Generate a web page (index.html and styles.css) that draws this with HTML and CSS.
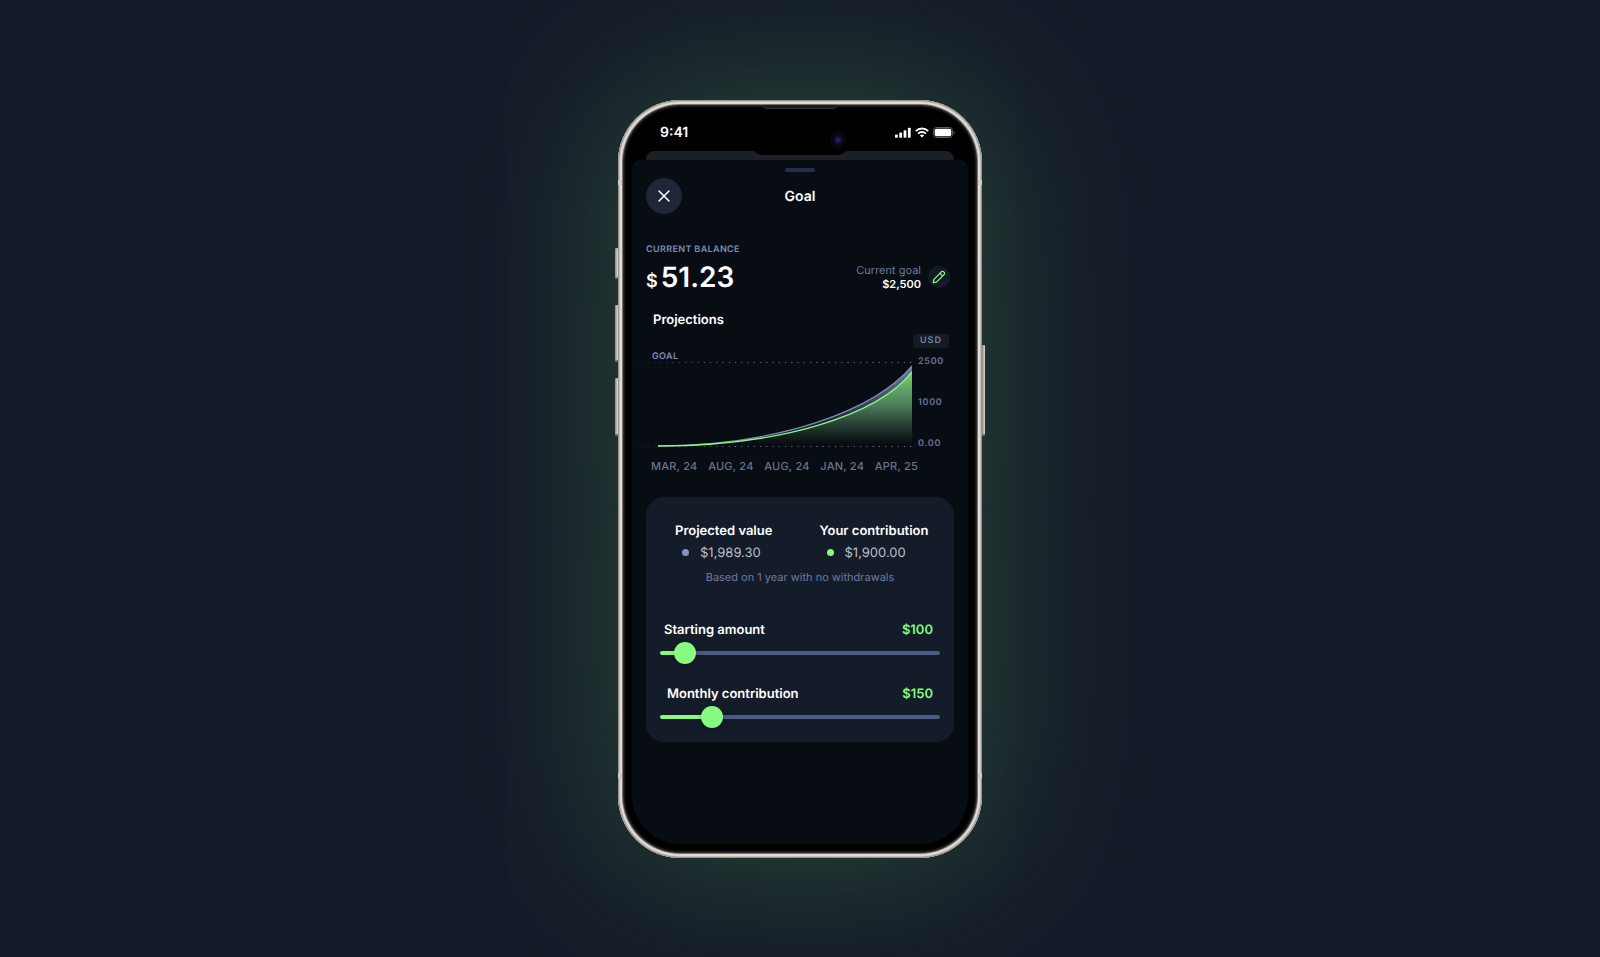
FILE: index.html
```html
<!DOCTYPE html>
<html lang="en">
<head>
  <meta charset="UTF-8">
  <meta name="viewport" content="width=device-width, initial-scale=1.0">
  <title>Goal</title>
  <link rel="stylesheet" href="styles.css">
</head>
<body>
  <div class="phone">
    <span class="side-btn mute"></span>
    <span class="side-btn vol-up"></span>
    <span class="side-btn vol-down"></span>
    <span class="side-btn power"></span>
    <span class="speaker"></span>
    <span class="antenna left-top"></span>
    <span class="antenna right-top"></span>
    <span class="antenna left-bottom"></span>
    <span class="antenna right-bottom"></span>

    <div class="screen">
      <div class="status-bar">
        <span class="time">9:41</span>
        <div class="status-icons">
          <svg width="16" height="11" viewBox="0 0 16 11" fill="#fff">
            <rect x="0" y="7.4" width="2.8" height="3.4" rx="0.9"/>
            <rect x="4.3" y="5.6" width="2.8" height="5.2" rx="0.9"/>
            <rect x="8.6" y="3.2" width="2.8" height="7.6" rx="0.9"/>
            <rect x="12.9" y="0.7" width="2.8" height="10.1" rx="0.9"/>
          </svg>
          <svg width="14" height="11" viewBox="0 0 14 11" fill="none" stroke="#fff" stroke-width="1.9">
            <path d="M0.8 4.1a8.8 8.8 0 0 1 12.4 0"/>
            <path d="M3.1 6.6a5.5 5.5 0 0 1 7.8 0"/>
            <path d="M7 10.6 4.9 8.5a3 3 0 0 1 4.2 0z" fill="#fff" stroke="none"/>
          </svg>
          <svg width="22" height="11" viewBox="0 0 22 11">
            <rect x="0.5" y="0.5" width="19" height="10" rx="3" fill="none" stroke="#5c5c5c"/>
            <rect x="1.7" y="1.7" width="16.6" height="7.6" rx="1.8" fill="#fff"/>
            <path d="M20.6 3.8v3.4c.7-.3 1.1-1 1.1-1.7s-.4-1.4-1.1-1.7z" fill="#6c6c6c"/>
          </svg>
        </div>
      </div>
      <div class="notch"><span class="camera"></span></div>
      <div class="back-card"></div>

      <main class="sheet">
        <div class="handle"></div>
        <header>
          <button class="close-btn" type="button" aria-label="Close">
            <svg width="12" height="12" viewBox="0 0 12 12" fill="none" stroke="#fff" stroke-width="1.5" stroke-linecap="round">
              <path d="M1 1l10 10M11 1L1 11"/>
            </svg>
          </button>
          <h1>Goal</h1>
        </header>

        <div class="caption">CURRENT BALANCE</div>
        <div class="balance-row">
          <div class="amount"><span>$</span>51.23</div>
          <div class="goal">
            <div class="goal-text">
              <div class="goal-label">Current goal</div>
              <div class="goal-value">$2,500</div>
            </div>
            <button class="edit-btn" type="button" aria-label="Edit goal">
              <svg width="14" height="14" viewBox="0 0 14 14" fill="none" stroke="#86fb80" stroke-width="1.3" stroke-linejoin="round">
                <path d="M1.3 12.7l.5-3.1 7.4-7.7a1.9 1.9 0 0 1 2.8 2.7l-7.6 7.5z"/>
                <path d="M8 3.3l2.7 2.6"/>
              </svg>
            </button>
          </div>
        </div>

        <h2>Projections</h2>
        <div class="currency"><span>USD</span></div>
        <div class="chart">
          <div class="plot">
            <span class="goal-line">GOAL</span>
            <svg viewBox="0 0 280 92">
              <defs>
                <linearGradient id="green" x1="0" y1="0" x2="0" y2="1">
                  <stop offset="0" stop-color="#86fb80" stop-opacity=".85"/>
                  <stop offset=".45" stop-color="#79c78a" stop-opacity=".6"/>
                  <stop offset=".97" stop-color="#5fa070" stop-opacity="0"/>
                </linearGradient>
                <linearGradient id="purple" x1="0" y1="0" x2="0" y2="1">
                  <stop offset="0" stop-color="#7f88b4" stop-opacity=".9"/>
                  <stop offset=".8" stop-color="#7f88b4" stop-opacity=".1"/>
                </linearGradient>
                <linearGradient id="fade" gradientUnits="userSpaceOnUse" x1="0" y1="0" x2="280" y2="0">
                  <stop offset="0" stop-color="#8490a8" stop-opacity=".1"/>
                  <stop offset=".3" stop-color="#8490a8" stop-opacity=".7"/>
                  <stop offset="1" stop-color="#8490a8" stop-opacity=".8"/>
                </linearGradient>
              </defs>
              <path d="M3 6.5H280" stroke="url(#fade)" stroke-dasharray="1.2 5.05"/>
              <path d="M26 90C150 89 243 54 280 10V16C246 59 150 90 26 90z" fill="url(#purple)"/>
              <path d="M26 90C150 90 246 59 280 16V90z" fill="url(#green)"/>
              <path d="M3 90.5H280" stroke="url(#fade)" stroke-dasharray="1.2 5.05"/>
              <path d="M26 90C150 89 243 54 280 10" fill="none" stroke="#7f8bb8" stroke-width="1.2"/>
              <path d="M26 90C150 90 246 59 280 16" fill="none" stroke="#86fb80" stroke-width="1.3"/>
            </svg>
          </div>
          <div class="y-axis">
            <span>2500</span>
            <span>1000</span>
            <span>0.00</span>
          </div>
        </div>
        <div class="x-axis">
          <span>MAR, 24</span>
          <span>AUG, 24</span>
          <span>AUG, 24</span>
          <span>JAN, 24</span>
          <span>APR, 25</span>
        </div>

        <section class="card">
          <div class="totals">
            <div class="total">
              <h3>Projected value</h3>
              <p><i class="dot"></i>$1,989.30</p>
            </div>
            <div class="total">
              <h3>Your contribution</h3>
              <p><i class="dot green"></i>$1,900.00</p>
            </div>
          </div>
          <p class="note">Based on 1 year with no withdrawals</p>

          <div class="field">
            <div class="field-head">
              <label for="starting">Starting amount</label>
              <output for="starting">$100</output>
            </div>
            <input type="range" id="starting" min="0" max="1800" value="100" style="--fill: 9%">
          </div>
          <div class="field monthly">
            <div class="field-head">
              <label for="monthly">Monthly contribution</label>
              <output for="monthly">$150</output>
            </div>
            <input type="range" id="monthly" min="0" max="950" value="150" style="--fill: 18%">
          </div>
        </section>
      </main>
    </div>
  </div>
  <script>
    const rangeEls = document.querySelectorAll("input[type='range']");

    rangeEls.forEach((rangeEl) => {
      rangeEl.addEventListener("input", () => {
        const outputEl = rangeEl.parentElement.querySelector("output");
        outputEl.textContent = `$${rangeEl.value}`;
        rangeEl.style.setProperty("--fill", `${(rangeEl.value / rangeEl.max) * 100}%`);
      });
    });
  </script>
</body>
</html>
```
FILE: styles.css
```css
*{
  box-sizing: border-box;
}
body{
  margin: 0;
  min-height: 100vh;
  display: flex;
  justify-content: center;
  align-items: center;
  overflow-x: hidden;
  font-family: Inter, "Liberation Sans", sans-serif;
  text-rendering: geometricPrecision;
  background-color: #151c29;
  color: #fff;
}
h1, h2, h3, p{
  margin: 0;
}
button{
  border: none;
  padding: 0;
  display: flex;
  justify-content: center;
  align-items: center;
  border-radius: 50%;
  cursor: pointer;
}
.phone{
  position: relative;
  width: 100%;
  max-width: 364px;
  padding: 14px;
  border-radius: 62px;
  background-color: #000;
  box-shadow:
    inset 0 0 0 1px #98928a,
    inset 0 0 0 2px #c4c0ba,
    inset 0 0 0 4px #dedcd8,
    inset 0 0 0 5px #77736e,
    inset 0 0 0 6px #2b2a2a,
    inset 0 0 2px 7px #1c1c1c,
    0 0 160px rgba(48,84,60,.85);
}
.side-btn{
  position: absolute;
  width: 3px;
  background: linear-gradient(90deg, #8f8981, #dedad4);
  border-radius: 1px;
  border-bottom: 2px solid #77736c;
}
.mute{
  left: -3px;
  top: 148px;
  height: 31px;
}
.vol-up{
  left: -3px;
  top: 205px;
  height: 57px;
}
.vol-down{
  left: -3px;
  top: 278px;
  height: 58px;
}
.power{
  right: -3px;
  top: 245px;
  height: 91px;
}
.speaker{
  position: absolute;
  top: 5px;
  left: 145px;
  width: 74px;
  height: 4px;
  background-color: #1b1b1b;
  border-bottom: 1px solid #343434;
  border-radius: 0 0 4px 4px;
}
.antenna{
  position: absolute;
  width: 4px;
  height: 5px;
  background-color: #cfcdc5;
}
.left-top{
  left: 0;
  top: 80px;
}
.right-top{
  right: 0;
  top: 80px;
}
.left-bottom{
  left: 0;
  bottom: 80px;
}
.right-bottom{
  right: 0;
  bottom: 80px;
}
.screen{
  position: relative;
  border-radius: 48px;
  overflow: hidden;
}
.status-bar{
  display: flex;
  justify-content: space-between;
  align-items: center;
  height: 37px;
  padding: 0 13px 0 28px;
}
.time{
  font-size: 14px;
  font-weight: 600;
  line-height: 16px;
  padding-top: 2px;
}
.status-icons{
  display: flex;
  gap: 4px;
}
.status-icons svg{
  display: block;
}
.notch{
  position: absolute;
  top: 10px;
  left: 50%;
  width: 98px;
  height: 31px;
  margin-left: -49px;
  border-radius: 0 0 12px 12px;
  background-color: #000;
}
.camera{
  position: absolute;
  right: 3px;
  top: 8px;
  width: 16px;
  height: 16px;
  border-radius: 50%;
  background: radial-gradient(circle, #2c3690 0, #15174c 2px, #0b0b30 4px, #08080a 5px, #08080a 8px);
}
.back-card{
  height: 9px;
  margin: 0 14px;
  border-radius: 8px 8px 0 0;
  background-color: #1b1f26;
}
.sheet{
  padding: 8px 14px 102px;
  border-radius: 8px 8px 0 0;
  background-color: #080d14;
}
.handle{
  width: 30px;
  height: 4px;
  margin: 0 auto 6px;
  border-radius: 2px;
  background-color: #242e48;
}
header{
  display: grid;
  grid-template-columns: 36px 1fr 36px;
  align-items: center;
  margin-bottom: 30px;
}
.close-btn{
  width: 36px;
  height: 36px;
  background-color: #1e2638;
}
h1{
  font-size: 14px;
  line-height: 16px;
  font-weight: 600;
  text-align: center;
  padding-top: 2px;
}
.caption{
  font-size: 9px;
  line-height: 12px;
  font-weight: 600;
  letter-spacing: .04em;
  color: #7f8bb8;
}
.balance-row{
  display: flex;
  justify-content: space-between;
  align-items: center;
  margin: 3px 4px 17px 0;
}
.amount{
  display: flex;
  align-items: baseline;
  gap: 3px;
  font-size: 28px;
  line-height: 36px;
  font-weight: 600;
}
.amount span{
  font-size: 18px;
  line-height: 20px;
}
.goal{
  display: flex;
  align-items: center;
  gap: 7px;
}
.goal-text{
  font-size: 11px;
  line-height: 14px;
  text-align: right;
}
.goal-label{
  color: #6c78a4;
}
.goal-value{
  font-weight: 600;
}
.edit-btn{
  width: 22px;
  height: 22px;
  background-color: #141b27;
}
h2{
  margin-left: 7px;
  font-size: 13px;
  line-height: 16px;
  font-weight: 600;
}
.currency{
  display: flex;
  justify-content: flex-end;
  margin: 6px 5px 8px 0;
}
.currency span{
  width: 36px;
  border-radius: 3px;
  background-color: #141b27;
  color: #78839c;
  font-size: 9px;
  line-height: 14px;
  font-weight: 600;
  letter-spacing: 1px;
  text-align: center;
}
.chart{
  display: flex;
  gap: 6px;
  margin-left: -14px;
}
.plot{
  position: relative;
  flex: 1;
}
.plot svg{
  display: block;
  width: 100%;
}
.goal-line{
  position: absolute;
  left: 20px;
  top: -5px;
  font-size: 9px;
  line-height: 12px;
  font-weight: 600;
  letter-spacing: .04em;
  color: #7f8bb8;
}
.y-axis{
  display: flex;
  flex-direction: column;
  justify-content: space-between;
  width: 36px;
  margin-bottom: -2px;
  font-size: 9px;
  line-height: 12px;
  font-weight: 600;
  letter-spacing: .08em;
  color: #68739a;
}
.x-axis{
  display: flex;
  justify-content: space-between;
  margin: 11px 36px 24px 5px;
  font-size: 11px;
  line-height: 14px;
  font-weight: 500;
  letter-spacing: .02em;
  color: #6a748c;
}
.card{
  padding: 26px 14px 14px;
  border-radius: 18px;
  background-color: #151c29;
}
.totals{
  display: grid;
  grid-template-columns: 1fr 1fr;
  padding-left: 15px;
  column-gap: 24px;
}
h3{
  font-size: 13px;
  line-height: 16px;
  font-weight: 600;
  margin-bottom: 6px;
  white-space: nowrap;
}
.total p{
  display: flex;
  align-items: center;
  padding-left: 7px;
  font-size: 13px;
  line-height: 16px;
  color: #b9bfcf;
}
.dot{
  width: 7px;
  height: 7px;
  margin-right: 11px;
  border-radius: 50%;
  background-color: #8693c4;
}
.dot.green{
  background-color: #86fb80;
}
.note{
  margin: 9px 0 38px;
  font-size: 11px;
  line-height: 14px;
  text-align: center;
  color: #6c78a4;
}
.field + .field{
  margin-top: 22px;
}
.field-head{
  display: flex;
  justify-content: space-between;
  padding: 0 7px 4px 4px;
  font-size: 13px;
  line-height: 16px;
  font-weight: 600;
}
.monthly .field-head{
  padding-left: 7px;
}
.field-head output{
  color: #86fb80;
}
input[type="range"]{
  -webkit-appearance: none;
  appearance: none;
  display: block;
  width: 100%;
  height: 22px;
  margin: 0;
  background: none;
  cursor: pointer;
}
input[type="range"]::-webkit-slider-runnable-track{
  height: 4px;
  border-radius: 2px;
  background: linear-gradient(90deg, #86fb80 var(--fill), #4c5a87 var(--fill));
}
input[type="range"]::-webkit-slider-thumb{
  -webkit-appearance: none;
  width: 22px;
  height: 22px;
  margin-top: -9px;
  border-radius: 50%;
  background-color: #86fb80;
  box-shadow: 0 2px 6px rgba(0,0,0,.25);
}
```
